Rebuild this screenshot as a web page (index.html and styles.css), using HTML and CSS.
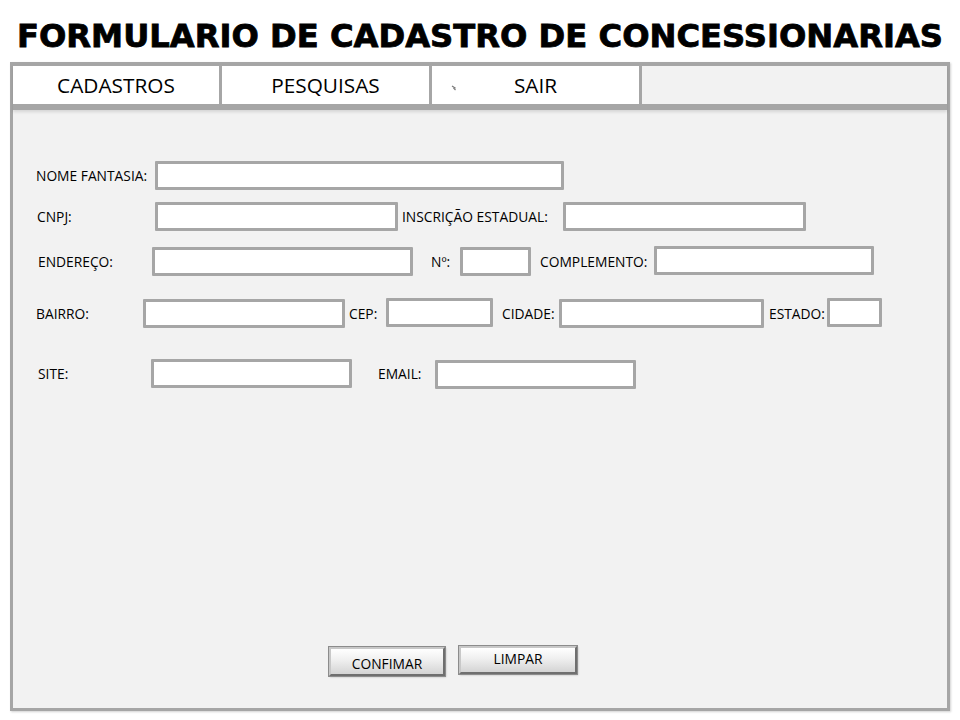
FILE: index.html
```html
<!DOCTYPE html>
<html lang="pt-BR">
<head>
<meta charset="utf-8">
<title>Formulario de Cadastro de Concessionarias</title>
<link rel="stylesheet" href="styles.css">
</head>
<body>
<h1 class="title">FORMULARIO DE CADASTRO DE CONCESSIONARIAS</h1>
<div class="window">
  <nav class="menubar">
    <div class="tab tab-1">CADASTROS</div>
    <div class="sep"></div>
    <div class="tab tab-2">PESQUISAS</div>
    <div class="sep"></div>
    <div class="tab tab-3"><svg class="mark" width="6" height="6" viewBox="0 0 6 6"><path d="M1 1 L4 3 L3 3.5 L4.5 5" stroke="#7a7a7a" stroke-width="1.2" fill="none"/></svg>SAIR</div>
    <div class="sep"></div>
    <div class="tab-rest"></div>
  </nav>
  <form class="form">
    <div class="row row-1">
      <label class="lbl l-nome">NOME FANTASIA:</label>
      <input class="fld f-nome" type="text">
    </div>
    <div class="row row-2">
      <label class="lbl l-cnpj">CNPJ:</label>
      <input class="fld f-cnpj" type="text">
      <label class="lbl l-insc">INSCRIÇÃO ESTADUAL:</label>
      <input class="fld f-insc" type="text">
    </div>
    <div class="row row-3">
      <label class="lbl l-end">ENDEREÇO:</label>
      <input class="fld f-end" type="text">
      <label class="lbl l-num">Nº:</label>
      <input class="fld f-num" type="text">
      <label class="lbl l-comp">COMPLEMENTO:</label>
      <input class="fld f-comp up1" type="text">
    </div>
    <div class="row row-4">
      <label class="lbl l-bairro">BAIRRO:</label>
      <input class="fld f-bairro" type="text">
      <label class="lbl l-cep">CEP:</label>
      <input class="fld f-cep up1" type="text">
      <label class="lbl l-cid">CIDADE:</label>
      <input class="fld f-cid" type="text">
      <label class="lbl l-est">ESTADO:</label>
      <input class="fld f-est up1" type="text">
    </div>
    <div class="row row-5">
      <label class="lbl l-site">SITE:</label>
      <input class="fld f-site" type="text">
      <label class="lbl l-email">EMAIL:</label>
      <input class="fld f-email down1" type="text">
    </div>
    <div class="buttons">
      <button type="button" class="btn btn-confirm">CONFIMAR</button>
      <button type="button" class="btn btn-clear">LIMPAR</button>
    </div>
  </form>
</div>
</body>
</html>
```

FILE: styles.css
```css
* { box-sizing: border-box; }

html, body {
  margin: 0;
  padding: 0;
  background: #ffffff;
}

body {
  width: 960px;
  height: 720px;
  overflow: hidden;
  font-family: "Open Sans", "Noto Sans", sans-serif;
  color: #000;
}

.title {
  margin: 0;
  height: 62px;
  padding-top: 10px;
  line-height: 52px;
  font-family: "DejaVu Sans", sans-serif;
  font-weight: bold;
  font-size: 32.2px;
  letter-spacing: 0;
  text-align: center;
  color: #000;
  -webkit-text-stroke: 0.8px #000;
  white-space: nowrap;
}

.window {
  margin-left: 10px;
  width: 940px;
  height: 649px;
  border: 3px solid #a6a6a6;
  background: #f2f2f2;
  box-shadow: 1px 1px 2px rgba(0, 0, 0, 0.18);
  display: flex;
  flex-direction: column;
}

.menubar {
  display: flex;
  height: 45px;
  flex: none;
  border-top: 1px solid #a6a6a6;
  border-bottom: 6px solid #a6a6a6;
  box-shadow: 0 2px 3px rgba(0, 0, 0, 0.12);
}

.tab {
  background: #ffffff;
  display: flex;
  align-items: center;
  justify-content: center;
  font-size: 20.8px;
  position: relative;
}

.tab-1 { width: 206px; }
.tab-2 { width: 207px; }
.tab-3 { width: 207px; }

.mark {
  position: absolute;
  left: 19px;
  top: 19px;
}

.sep {
  width: 3px;
  background: #a6a6a6;
}

.tab-rest {
  flex: 1;
  background: #f2f2f2;
}

.form {
  flex: 1;
  display: flex;
  flex-direction: column;
  margin: 0;
  padding-top: 51px;
  padding-bottom: 32px;
}

.row {
  display: flex;
  align-items: center;
  height: 29px;
}

.row-2 { margin-top: 12px; }
.row-3 { margin-top: 16px; }
.row-4 { margin-top: 23px; }
.row-5 { margin-top: 31px; }

.lbl {
  font-size: 13.8px;
  white-space: nowrap;
  flex: none;
}

.fld {
  flex: none;
  height: 29px;
  border: 3px solid #a6a6a6;
  background: #ffffff;
  border-radius: 1px;
  margin: 0;
  padding: 0 4px;
  outline: none;
}

.up1 { position: relative; top: -1px; }
.down1 { position: relative; top: 1px; }

/* row 1 */
.l-nome { margin-left: 23px; width: 119px; }
.f-nome { width: 409px; }

/* row 2 */
.l-cnpj { margin-left: 24px; width: 118px; }
.f-cnpj { width: 243px; }
.l-insc { margin-left: 4px; width: 161px; }
.f-insc { width: 243px; }

/* row 3 */
.l-end { margin-left: 25px; width: 114px; }
.f-end { width: 261px; }
.l-num { margin-left: 18px; width: 29px; }
.f-num { width: 71px; }
.l-comp { margin-left: 9px; width: 114px; }
.f-comp { width: 220px; }

/* row 4 */
.l-bairro { margin-left: 23px; width: 107px; }
.f-bairro { width: 202px; }
.l-cep { margin-left: 4px; width: 37px; }
.f-cep { width: 107px; }
.l-cid { margin-left: 9px; width: 57px; }
.f-cid { width: 205px; }
.l-est { margin-left: 5px; width: 58px; }
.f-est { width: 55px; }

/* row 5 */
.l-site { margin-left: 25px; width: 113px; }
.f-site { width: 201px; }
.l-email { margin-left: 26px; width: 57px; }
.f-email { width: 201px; }

.buttons {
  margin-top: auto;
  display: flex;
  align-items: flex-end;
  padding-left: 316px;
  gap: 14px;
}

.btn {
  font-family: "Open Sans", "Noto Sans", sans-serif;
  font-size: 13.8px;
  color: #000;
  border: 2px solid;
  border-color: #c8c8c8 #6f6f6f #6f6f6f #c8c8c8;
  background: linear-gradient(#ffffff 0%, #efefef 45%, #d4d4d4 100%);
  box-shadow: 0 0 0 1px #8c8c8c, 1px 1px 2px rgba(0, 0, 0, 0.25);
  padding: 0;
  margin: 0;
  cursor: default;
}

.btn-confirm {
  width: 116px;
  height: 29px;
  padding-top: 3px;
}

.btn-clear {
  width: 118px;
  height: 28px;
  margin-bottom: 2px;
  padding-bottom: 3px;
}
```
